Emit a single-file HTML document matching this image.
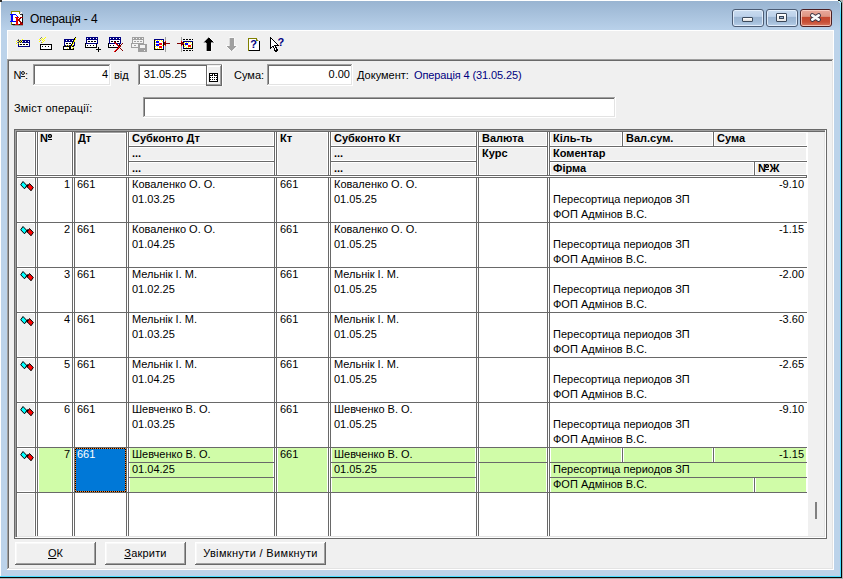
<!DOCTYPE html>
<html><head><meta charset="utf-8"><style>
html,body{margin:0;padding:0;width:843px;height:579px;overflow:hidden;background:#fff}
body{position:relative;font-family:"Liberation Sans",sans-serif}
div,svg{position:absolute}
.t{white-space:pre;font-family:"Liberation Sans",sans-serif}
</style></head><body>
<div style="left:0px;top:0px;width:843px;height:579px;background:#ffffff;"></div>
<div style="left:1px;top:1px;width:839px;height:575px;background:#bcd3ea;"></div>
<div style="left:1px;top:1px;width:839px;height:29px;background:linear-gradient(#99b4d1,#b9d1ea)"></div>
<div style="left:840px;top:1px;width:1px;height:576px;background:#48dcff;"></div>
<div style="left:0px;top:576px;width:841px;height:1px;background:#48dcff;"></div>
<div style="left:840px;top:1px;width:1px;height:14px;background:linear-gradient(#b8ecf8,#48dcff)"></div>
<div style="left:841px;top:3px;width:1px;height:575px;background:#050505;"></div>
<div style="left:0px;top:577px;width:842px;height:1px;background:#050505;"></div>
<div style="left:842px;top:0px;width:1px;height:579px;background:#b0b0b0;"></div>
<div style="left:0px;top:578px;width:843px;height:1px;background:#b0b0b0;"></div>
<div style="left:838px;top:0px;width:5px;height:3px;background:#b0b0b0;"></div>
<div style="left:838px;top:0px;width:2px;height:1px;background:#101010;"></div>
<div style="left:840px;top:1px;width:1px;height:1px;background:#1a5a60;"></div>
<div style="left:841px;top:2px;width:1px;height:1px;background:#1a5a60;"></div>
<div style="left:838px;top:1px;width:2px;height:1px;background:#b8e4f0;"></div>
<div style="left:839px;top:2px;width:2px;height:1px;background:#b8ecf8;"></div>
<div style="left:0px;top:0px;width:2px;height:2px;background:#303030;"></div>
<div style="left:7px;top:30px;width:827px;height:540px;background:#f0f0f0;"></div>
<div style="left:7px;top:30px;width:827px;height:1px;background:#ffffff;"></div>
<div style="left:7px;top:30px;width:1px;height:29px;background:#ffffff;"></div>
<div style="left:7px;top:59px;width:827px;height:1px;background:#a0a0a0;"></div>
<div style="left:7px;top:59px;width:1px;height:511px;background:#a0a0a0;"></div>
<div style="left:8px;top:60px;width:825px;height:1px;background:#696969;"></div>
<div style="left:8px;top:60px;width:1px;height:509px;background:#696969;"></div>
<div style="left:7px;top:569px;width:827px;height:1px;background:#ffffff;"></div>
<div style="left:833px;top:30px;width:1px;height:540px;background:#ffffff;"></div>
<div style="left:8px;top:568px;width:825px;height:1px;background:#e3e3e3;"></div>
<div style="left:832px;top:60px;width:1px;height:509px;background:#e3e3e3;"></div>
<svg style="left:0;top:0" width="30" height="30" viewBox="0 0 30 30" shape-rendering="crispEdges">
<rect x="12" y="12" width="10" height="12" fill="#ffffff"/>
<rect x="11" y="11" width="9" height="1" fill="#8a8a00"/><rect x="11" y="11" width="1" height="14" fill="#8a8a00"/>
<rect x="19" y="12" width="1" height="2" fill="#8a8a00"/><rect x="20" y="12" width="1" height="1" fill="#c8c8c8"/><rect x="21" y="13" width="1" height="1" fill="#c8c8c8"/>
<rect x="20" y="14" width="2" height="1" fill="#303030"/>
<rect x="22" y="14" width="1" height="10" fill="#101010"/>
<rect x="12" y="24" width="11" height="1" fill="#101010"/>
<rect x="13" y="25" width="10" height="1" fill="#8aa0a0"/>
<rect x="10" y="14" width="6" height="1" fill="#0000ff"/><rect x="11" y="14" width="2" height="8" fill="#0000ff"/>
<rect x="10" y="21" width="6" height="1" fill="#0000ff"/><rect x="16" y="15" width="1" height="1" fill="#0000ff"/>
<rect x="17" y="16" width="1" height="4" fill="#0000ff"/><rect x="16" y="20" width="1" height="1" fill="#0000ff"/>
<rect x="15" y="17" width="4" height="1" fill="#e00000"/><rect x="16" y="17" width="2" height="8" fill="#e00000"/>
<rect x="15" y="24" width="4" height="1" fill="#e00000"/>
<rect x="20" y="17" width="3" height="1" fill="#a00000"/><rect x="19" y="18" width="2" height="1" fill="#a00000"/><rect x="18" y="19" width="2" height="2" fill="#a00000"/>
<rect x="19" y="21" width="2" height="1" fill="#a00000"/><rect x="20" y="22" width="2" height="1" fill="#a00000"/><rect x="20" y="23" width="3" height="2" fill="#a00000"/>
</svg>
<div class="t" style="left:30px;top:12px;font-size:12px;line-height:15px;color:#000;letter-spacing:-0.15px;">Операція - 4</div>
<div style="left:732px;top:9px;width:30px;height:16px;border:1px solid #4c5c74;border-radius:3px;background:linear-gradient(#c9dbef 0%,#bcd1ea 40%,#9bb5d3 45%,#a3bdd9 75%,#b8cfea 100%);box-shadow:inset 0 0 0 1px rgba(235,244,255,0.8)"></div>
<div style="left:766px;top:9px;width:30px;height:16px;border:1px solid #4c5c74;border-radius:3px;background:linear-gradient(#c9dbef 0%,#bcd1ea 40%,#9bb5d3 45%,#a3bdd9 75%,#b8cfea 100%);box-shadow:inset 0 0 0 1px rgba(235,244,255,0.8)"></div>
<div style="left:800px;top:9px;width:30px;height:16px;border:1px solid #4b1f23;border-radius:3px;background:linear-gradient(#e9a99c 0%,#de9583 40%,#c4472e 45%,#c84f36 75%,#d77760 100%);box-shadow:inset 0 0 0 1px rgba(255,220,210,0.7)"></div>
<div style="left:742px;top:17px;width:9px;height:3px;border:1px solid #3c4a5c;border-radius:1px;background:linear-gradient(#ffffff,#dcdcdc)"></div>
<div style="left:776px;top:13px;width:9px;height:7px;border:1px solid #3a4658;border-radius:1px;background:linear-gradient(#ffffff,#e8e8e8)"></div>
<div style="left:779px;top:16px;width:3px;height:1px;border:1px solid #3a4658;background:#9fb8d6"></div>
<svg style="left:806px;top:10px" width="20" height="16" viewBox="0 0 20 16">
<path d="M6.3 5.4 L12.7 9.6 M12.7 5.4 L6.3 9.6" stroke="#3a3444" stroke-width="4.6" stroke-linecap="round"/>
<path d="M6.3 5.4 L12.7 9.6 M12.7 5.4 L6.3 9.6" stroke="#fafafa" stroke-width="2.7" stroke-linecap="round"/>
</svg>
<svg style="left:0;top:0" width="843" height="60" viewBox="0 0 843 60" shape-rendering="crispEdges"><rect x="18" y="40" width="12" height="7" fill="#000080"/><rect x="19" y="43" width="10" height="3" fill="#ffffff"/><rect x="22" y="41" width="1" height="1" fill="#ffffff"/><rect x="25" y="41" width="1" height="1" fill="#ffffff"/><rect x="28" y="41" width="1" height="1" fill="#ffffff"/><rect x="20" y="44" width="2" height="1" fill="#000000"/><rect x="23" y="44" width="2" height="1" fill="#000000"/><rect x="26" y="44" width="2" height="1" fill="#000000"/><rect x="16" y="41" width="1" height="1" fill="#ffff00"/><rect x="16" y="43" width="1" height="1" fill="#ffff00"/><rect x="19" y="40" width="1" height="1" fill="#ffff00"/><rect x="18" y="41" width="1" height="1" fill="#ffff00"/><rect x="20" y="41" width="1" height="1" fill="#ffff00"/><rect x="19" y="42" width="1" height="1" fill="#ffff00"/><rect x="21" y="40" width="1" height="1" fill="#ffff00"/><rect x="21" y="42" width="1" height="1" fill="#ffff00"/><rect x="22" y="39" width="1" height="1" fill="#ffff00"/><rect x="19" y="44" width="1" height="1" fill="#ffff00"/><rect x="18" y="39" width="1" height="1" fill="#808080"/><rect x="17" y="40" width="1" height="1" fill="#808080"/><rect x="17" y="42" width="1" height="1" fill="#808080"/><rect x="18" y="43" width="1" height="1" fill="#808080"/><rect x="21" y="41" width="1" height="1" fill="#000000"/><rect x="40" y="44" width="12" height="6" fill="#000000"/><rect x="41" y="45" width="10" height="4" fill="#ffffff"/><rect x="42" y="46" width="1" height="1" fill="#000000"/><rect x="45" y="46" width="1" height="1" fill="#000000"/><rect x="48" y="46" width="1" height="1" fill="#000000"/><rect x="39" y="39" width="1" height="1" fill="#ffff00"/><rect x="39" y="41" width="1" height="1" fill="#ffff00"/><rect x="42" y="38" width="1" height="1" fill="#ffff00"/><rect x="41" y="39" width="1" height="1" fill="#ffff00"/><rect x="43" y="39" width="1" height="1" fill="#ffff00"/><rect x="42" y="40" width="1" height="1" fill="#ffff00"/><rect x="44" y="38" width="1" height="1" fill="#ffff00"/><rect x="44" y="40" width="1" height="1" fill="#ffff00"/><rect x="45" y="37" width="1" height="1" fill="#ffff00"/><rect x="42" y="42" width="1" height="1" fill="#ffff00"/><rect x="43" y="41" width="1" height="1" fill="#ffff00"/><rect x="41" y="37" width="1" height="1" fill="#808080"/><rect x="40" y="38" width="1" height="1" fill="#808080"/><rect x="40" y="40" width="1" height="1" fill="#808080"/><rect x="41" y="42" width="1" height="1" fill="#808080"/><rect x="64" y="39" width="11" height="7" fill="#000080"/><rect x="65" y="42" width="9" height="3" fill="#ffffff"/><rect x="66" y="40" width="1" height="1" fill="#ffffff"/><rect x="69" y="40" width="1" height="1" fill="#ffffff"/><rect x="72" y="40" width="1" height="1" fill="#ffffff"/><rect x="66" y="43" width="2" height="1" fill="#000000"/><rect x="69" y="43" width="2" height="1" fill="#000000"/><rect x="63" y="46" width="11" height="4" fill="#000000"/><rect x="64" y="47" width="5" height="2" fill="#ffffff"/><rect x="71" y="47" width="2" height="2" fill="#ffffff"/><rect x="75" y="37" width="1" height="1" fill="#000000"/><rect x="74" y="38" width="1" height="1" fill="#000000"/><rect x="74" y="39" width="1" height="1" fill="#000000"/><rect x="73" y="40" width="1" height="1" fill="#000000"/><rect x="73" y="41" width="1" height="1" fill="#000000"/><rect x="72" y="42" width="1" height="1" fill="#000000"/><rect x="72" y="43" width="1" height="1" fill="#000000"/><rect x="71" y="44" width="1" height="1" fill="#000000"/><rect x="71" y="45" width="1" height="1" fill="#000000"/><rect x="70" y="46" width="1" height="1" fill="#000000"/><rect x="70" y="47" width="1" height="1" fill="#000000"/><rect x="75" y="38" width="1" height="1" fill="#ffff00"/><rect x="75" y="39" width="1" height="1" fill="#ffff00"/><rect x="74" y="40" width="1" height="1" fill="#ffff00"/><rect x="74" y="41" width="1" height="1" fill="#ffff00"/><rect x="73" y="42" width="1" height="1" fill="#ffff00"/><rect x="73" y="43" width="1" height="1" fill="#ffff00"/><rect x="72" y="44" width="1" height="1" fill="#ffff00"/><rect x="72" y="45" width="1" height="1" fill="#ffff00"/><rect x="71" y="46" width="1" height="1" fill="#ffff00"/><rect x="66" y="45" width="1" height="1" fill="#ffff00"/><rect x="68" y="45" width="1" height="1" fill="#ffff00"/><rect x="67" y="48" width="1" height="1" fill="#ffff00"/><rect x="72" y="48" width="1" height="1" fill="#ffff00"/><rect x="73" y="47" width="1" height="1" fill="#ffff00"/><rect x="85" y="43" width="12" height="5" fill="#000000"/><rect x="86" y="44" width="10" height="3" fill="#ffffff"/><rect x="86" y="37" width="12" height="7" fill="#000080"/><rect x="87" y="40" width="10" height="3" fill="#ffffff"/><rect x="87" y="38" width="1" height="1" fill="#ffffff"/><rect x="90" y="38" width="1" height="1" fill="#ffffff"/><rect x="93" y="38" width="1" height="1" fill="#ffffff"/><rect x="96" y="38" width="1" height="1" fill="#ffffff"/><rect x="88" y="41" width="2" height="1" fill="#000000"/><rect x="91" y="41" width="2" height="1" fill="#000000"/><rect x="94" y="41" width="2" height="1" fill="#000000"/><rect x="87" y="45" width="1" height="1" fill="#000000"/><rect x="90" y="45" width="1" height="1" fill="#000000"/><rect x="93" y="45" width="1" height="1" fill="#000000"/><rect x="96" y="49" width="5" height="1" fill="#000000"/><rect x="98" y="47" width="1" height="5" fill="#000000"/><rect x="108" y="43" width="12" height="5" fill="#000000"/><rect x="109" y="44" width="10" height="3" fill="#ffffff"/><rect x="109" y="37" width="12" height="7" fill="#000080"/><rect x="110" y="40" width="10" height="3" fill="#ffffff"/><rect x="110" y="38" width="1" height="1" fill="#ffffff"/><rect x="113" y="38" width="1" height="1" fill="#ffffff"/><rect x="116" y="38" width="1" height="1" fill="#ffffff"/><rect x="119" y="38" width="1" height="1" fill="#ffffff"/><rect x="111" y="41" width="2" height="1" fill="#000000"/><rect x="114" y="41" width="2" height="1" fill="#000000"/><rect x="117" y="41" width="2" height="1" fill="#000000"/><rect x="110" y="45" width="1" height="1" fill="#000000"/><rect x="113" y="45" width="1" height="1" fill="#000000"/><rect x="114" y="42" width="1" height="1" fill="#ff0000"/><rect x="115" y="42" width="1" height="1" fill="#800000"/><rect x="122" y="43" width="1" height="1" fill="#800000"/><rect x="115" y="43" width="1" height="1" fill="#ff0000"/><rect x="116" y="43" width="1" height="1" fill="#800000"/><rect x="121" y="44" width="1" height="1" fill="#800000"/><rect x="116" y="44" width="1" height="1" fill="#ff0000"/><rect x="117" y="44" width="1" height="1" fill="#800000"/><rect x="120" y="45" width="1" height="1" fill="#800000"/><rect x="117" y="45" width="1" height="1" fill="#ff0000"/><rect x="118" y="45" width="1" height="1" fill="#800000"/><rect x="119" y="46" width="1" height="1" fill="#ff0000"/><rect x="120" y="46" width="1" height="1" fill="#800000"/><rect x="118" y="46" width="1" height="1" fill="#800000"/><rect x="118" y="47" width="1" height="1" fill="#ff0000"/><rect x="119" y="47" width="1" height="1" fill="#800000"/><rect x="119" y="47" width="1" height="1" fill="#800000"/><rect x="117" y="48" width="1" height="1" fill="#ff0000"/><rect x="118" y="48" width="1" height="1" fill="#800000"/><rect x="120" y="48" width="1" height="1" fill="#800000"/><rect x="116" y="49" width="1" height="1" fill="#ff0000"/><rect x="117" y="49" width="1" height="1" fill="#800000"/><rect x="121" y="49" width="1" height="1" fill="#800000"/><rect x="115" y="50" width="1" height="1" fill="#ff0000"/><rect x="116" y="50" width="1" height="1" fill="#800000"/><rect x="122" y="50" width="1" height="1" fill="#800000"/><rect x="114" y="51" width="1" height="1" fill="#ff0000"/><rect x="115" y="51" width="1" height="1" fill="#800000"/><rect x="115" y="51" width="1" height="1" fill="#800000"/><rect x="132" y="37" width="12" height="7" fill="#a0a0a0"/><rect x="133" y="40" width="10" height="3" fill="#f4f4f4"/><rect x="133" y="38" width="1" height="1" fill="#f4f4f4"/><rect x="136" y="38" width="1" height="1" fill="#f4f4f4"/><rect x="139" y="38" width="1" height="1" fill="#f4f4f4"/><rect x="142" y="38" width="1" height="1" fill="#f4f4f4"/><rect x="134" y="41" width="2" height="1" fill="#a0a0a0"/><rect x="137" y="41" width="2" height="1" fill="#a0a0a0"/><rect x="140" y="41" width="2" height="1" fill="#a0a0a0"/><rect x="131" y="43" width="9" height="5" fill="#a0a0a0"/><rect x="132" y="44" width="7" height="3" fill="#f4f4f4"/><rect x="134" y="45" width="2" height="1" fill="#a0a0a0"/><rect x="138" y="44" width="9" height="8" fill="#a0a0a0"/><rect x="140" y="45" width="5" height="3" fill="#f4f4f4"/><rect x="144" y="50" width="1" height="1" fill="#f4f4f4"/><rect x="154" y="39" width="10" height="11" fill="#000000"/><rect x="154" y="39" width="10" height="1" fill="#000080"/><rect x="163" y="39" width="1" height="3" fill="#000080"/><rect x="163" y="46" width="1" height="3" fill="#000080"/><rect x="155" y="40" width="8" height="9" fill="#ffffff"/><rect x="155" y="40" width="1" height="1" fill="#ffff00"/><rect x="157" y="40" width="1" height="1" fill="#ffff00"/><rect x="159" y="40" width="1" height="1" fill="#ffff00"/><rect x="161" y="40" width="1" height="1" fill="#ffff00"/><rect x="155" y="42" width="1" height="1" fill="#ffff00"/><rect x="155" y="44" width="1" height="1" fill="#ffff00"/><rect x="155" y="46" width="1" height="1" fill="#ffff00"/><rect x="155" y="48" width="1" height="1" fill="#ffff00"/><rect x="157" y="48" width="1" height="1" fill="#ffff00"/><rect x="159" y="48" width="1" height="1" fill="#ffff00"/><rect x="161" y="48" width="1" height="1" fill="#ffff00"/><rect x="162" y="41" width="1" height="1" fill="#ffff00"/><rect x="162" y="45" width="1" height="1" fill="#ffff00"/><rect x="157" y="46" width="1" height="1" fill="#ffff00"/><rect x="156" y="41" width="3" height="2" fill="#0000ff"/><rect x="156" y="44" width="3" height="2" fill="#0000ff"/><rect x="159" y="43" width="3" height="2" fill="#ff0000"/><rect x="159" y="46" width="3" height="2" fill="#ff0000"/><rect x="165" y="37" width="1" height="15" fill="#a0a0a0"/><rect x="164" y="43" width="6" height="1" fill="#800000"/><rect x="165" y="41" width="1" height="1" fill="#ff0000"/><rect x="164" y="42" width="2" height="1" fill="#800000"/><rect x="164" y="44" width="2" height="1" fill="#800000"/><rect x="165" y="45" width="1" height="1" fill="#ff0000"/><rect x="181" y="37" width="1" height="15" fill="#a0a0a0"/><rect x="183" y="39" width="2" height="1" fill="#000000"/><rect x="186" y="39" width="2" height="1" fill="#000000"/><rect x="189" y="39" width="2" height="1" fill="#000000"/><rect x="192" y="39" width="1" height="1" fill="#000000"/><rect x="183" y="50" width="2" height="1" fill="#000000"/><rect x="186" y="50" width="2" height="1" fill="#000000"/><rect x="189" y="50" width="2" height="1" fill="#000000"/><rect x="192" y="50" width="1" height="1" fill="#000000"/><rect x="183" y="41" width="10" height="8" fill="#000000"/><rect x="183" y="41" width="10" height="1" fill="#000080"/><rect x="183" y="46" width="1" height="3" fill="#000080"/><rect x="184" y="42" width="8" height="6" fill="#ffffff"/><rect x="184" y="42" width="1" height="1" fill="#ffff00"/><rect x="186" y="42" width="1" height="1" fill="#ffff00"/><rect x="188" y="42" width="1" height="1" fill="#ffff00"/><rect x="190" y="42" width="1" height="1" fill="#ffff00"/><rect x="184" y="44" width="1" height="1" fill="#ffff00"/><rect x="184" y="46" width="1" height="1" fill="#ffff00"/><rect x="186" y="47" width="1" height="1" fill="#ffff00"/><rect x="188" y="47" width="1" height="1" fill="#ffff00"/><rect x="190" y="47" width="1" height="1" fill="#ffff00"/><rect x="191" y="44" width="1" height="1" fill="#ffff00"/><rect x="185" y="45" width="1" height="1" fill="#ffff00"/><rect x="185" y="43" width="3" height="2" fill="#0000ff"/><rect x="188" y="45" width="3" height="2" fill="#ff0000"/><rect x="177" y="43" width="6" height="1" fill="#800000"/><rect x="181" y="41" width="1" height="1" fill="#ff0000"/><rect x="181" y="42" width="2" height="1" fill="#800000"/><rect x="181" y="44" width="2" height="1" fill="#800000"/><rect x="181" y="45" width="1" height="1" fill="#ff0000"/><rect x="183" y="43" width="1" height="1" fill="#ff0000"/><path d="M208.5 37 L214 42.5 L211 42.5 L211 51 L206 51 L206 42.5 L203 42.5 Z" fill="#000" stroke="#fff" stroke-width="0.6"/><path d="M229 37.5 L234 37.5 L234 45.5 L237 45.5 L231.5 51 L226 45.5 L229 45.5 Z" fill="#a0a0a0" stroke="#fff" stroke-width="0.6"/><rect x="249" y="39" width="10" height="12" fill="#ffffff"/><rect x="248" y="38" width="9" height="1" fill="#808000"/><rect x="248" y="38" width="1" height="13" fill="#808000"/><rect x="256" y="38" width="1" height="3" fill="#808000"/><rect x="256" y="40" width="2" height="1" fill="#808000"/><rect x="257" y="39" width="1" height="1" fill="#c0c0c0"/><rect x="258" y="40" width="1" height="1" fill="#c0c0c0"/><rect x="259" y="41" width="1" height="10" fill="#000000"/><rect x="249" y="50" width="11" height="1" fill="#000000"/><text x="250.2" y="48.4" font-family="Liberation Sans" font-weight="bold" font-size="11" fill="#000080">?</text><path d="M270.5 37.5 L270.5 48.5 L273 46 L275.5 51.5 L277.5 50.5 L275 45.5 L278.5 45.5 Z" fill="#ffffff" stroke="#000" stroke-width="1"/><text x="277.5" y="46" font-family="Liberation Sans" font-weight="bold" font-size="11" fill="#000080">?</text></svg>
<div class="t" style="left:13.6px;top:68px;font-size:11px;line-height:15px;color:#000;">N</div>
<svg style="left:21px;top:71px" width="4" height="4" viewBox="0 0 4 4"><ellipse cx="2" cy="2" rx="1.45" ry="1.45" fill="none" stroke="#000" stroke-width="0.95"/></svg>
<div style="left:21px;top:76px;width:4px;height:1px;background:#202020;"></div>
<div class="t" style="left:25px;top:68px;font-size:11px;line-height:15px;color:#000;">:</div>
<div style="left:33px;top:64px;width:78px;height:22px;background:#ffffff;"></div>
<div style="left:33px;top:64px;width:77px;height:1px;background:#a0a0a0;"></div>
<div style="left:33px;top:64px;width:1px;height:21px;background:#a0a0a0;"></div>
<div style="left:34px;top:65px;width:75px;height:1px;background:#696969;"></div>
<div style="left:34px;top:65px;width:1px;height:19px;background:#696969;"></div>
<div style="left:33px;top:85px;width:78px;height:1px;background:#ffffff;"></div>
<div style="left:110px;top:64px;width:1px;height:22px;background:#ffffff;"></div>
<div style="left:34px;top:84px;width:76px;height:1px;background:#e3e3e3;"></div>
<div style="left:109px;top:65px;width:1px;height:20px;background:#e3e3e3;"></div>
<div class="t" style="left:68px;top:67px;width:40px;text-align:right;font-size:11px;line-height:15px;color:#000;">4</div>
<div class="t" style="left:114px;top:68px;font-size:11px;line-height:15px;color:#000;">від</div>
<div style="left:138px;top:64px;width:85px;height:22px;background:#ffffff;"></div>
<div style="left:138px;top:64px;width:84px;height:1px;background:#a0a0a0;"></div>
<div style="left:138px;top:64px;width:1px;height:21px;background:#a0a0a0;"></div>
<div style="left:139px;top:65px;width:82px;height:1px;background:#696969;"></div>
<div style="left:139px;top:65px;width:1px;height:19px;background:#696969;"></div>
<div style="left:138px;top:85px;width:85px;height:1px;background:#ffffff;"></div>
<div style="left:222px;top:64px;width:1px;height:22px;background:#ffffff;"></div>
<div style="left:139px;top:84px;width:83px;height:1px;background:#e3e3e3;"></div>
<div style="left:221px;top:65px;width:1px;height:20px;background:#e3e3e3;"></div>
<div class="t" style="left:143.7px;top:67px;font-size:11px;line-height:15px;color:#000;">31.05.25</div>
<div style="left:206px;top:65px;width:16px;height:21px;background:#f0f0f0;"></div>
<div style="left:206px;top:65px;width:1px;height:21px;background:#696969;"></div>
<div style="left:207px;top:66px;width:13px;height:1px;background:#ffffff;"></div>
<div style="left:207px;top:66px;width:1px;height:18px;background:#ffffff;"></div>
<div style="left:220px;top:66px;width:1px;height:19px;background:#a0a0a0;"></div>
<div style="left:207px;top:84px;width:14px;height:1px;background:#a0a0a0;"></div>
<div style="left:221px;top:65px;width:1px;height:21px;background:#696969;"></div>
<div style="left:206px;top:85px;width:16px;height:1px;background:#696969;"></div>
<svg style="left:209px;top:73px" width="9" height="9" viewBox="0 0 9 9" shape-rendering="crispEdges">
<rect x="0" y="0" width="9" height="9" fill="#000"/>
<rect x="1" y="1" width="2" height="1" fill="#fff"/><rect x="6" y="1" width="2" height="1" fill="#fff"/>
<rect x="4" y="1" width="1" height="2" fill="#fff"/>
<rect x="1" y="3" width="7" height="5" fill="#fff"/>
<rect x="3" y="4" width="1" height="1" fill="#000"/><rect x="5" y="4" width="1" height="1" fill="#000"/>
<rect x="3" y="6" width="1" height="1" fill="#000"/><rect x="5" y="6" width="1" height="1" fill="#000"/>
<rect x="1" y="4" width="1" height="1" fill="#000"/><rect x="7" y="4" width="1" height="1" fill="#000"/>
<rect x="1" y="6" width="1" height="1" fill="#000"/><rect x="7" y="6" width="1" height="1" fill="#000"/>
</svg>
<div class="t" style="left:234px;top:68px;font-size:11px;line-height:15px;color:#000;">Сума:</div>
<div style="left:267px;top:64px;width:86px;height:22px;background:#ffffff;"></div>
<div style="left:267px;top:64px;width:85px;height:1px;background:#a0a0a0;"></div>
<div style="left:267px;top:64px;width:1px;height:21px;background:#a0a0a0;"></div>
<div style="left:268px;top:65px;width:83px;height:1px;background:#696969;"></div>
<div style="left:268px;top:65px;width:1px;height:19px;background:#696969;"></div>
<div style="left:267px;top:85px;width:86px;height:1px;background:#ffffff;"></div>
<div style="left:352px;top:64px;width:1px;height:22px;background:#ffffff;"></div>
<div style="left:268px;top:84px;width:84px;height:1px;background:#e3e3e3;"></div>
<div style="left:351px;top:65px;width:1px;height:20px;background:#e3e3e3;"></div>
<div class="t" style="left:290px;top:67px;width:60px;text-align:right;font-size:11px;line-height:15px;color:#000;">0.00</div>
<div class="t" style="left:357px;top:68px;font-size:11px;line-height:15px;color:#000;">Документ:</div>
<div class="t" style="left:414px;top:68px;font-size:11px;line-height:15px;color:#000080;letter-spacing:-0.12px;">Операція 4 (31.05.25)</div>
<div class="t" style="left:14px;top:101px;font-size:11px;line-height:15px;color:#000;letter-spacing:0.2px;">Зміст операції:</div>
<div style="left:143px;top:97px;width:473px;height:21px;background:#ffffff;"></div>
<div style="left:143px;top:97px;width:472px;height:1px;background:#a0a0a0;"></div>
<div style="left:143px;top:97px;width:1px;height:20px;background:#a0a0a0;"></div>
<div style="left:144px;top:98px;width:470px;height:1px;background:#696969;"></div>
<div style="left:144px;top:98px;width:1px;height:18px;background:#696969;"></div>
<div style="left:143px;top:117px;width:473px;height:1px;background:#ffffff;"></div>
<div style="left:615px;top:97px;width:1px;height:21px;background:#ffffff;"></div>
<div style="left:144px;top:116px;width:471px;height:1px;background:#e3e3e3;"></div>
<div style="left:614px;top:98px;width:1px;height:19px;background:#e3e3e3;"></div>
<div style="left:15px;top:542px;width:81px;height:23px;background:#f0f0f0;"></div>
<div style="left:15px;top:542px;width:80px;height:1px;background:#ffffff;"></div>
<div style="left:15px;top:542px;width:1px;height:22px;background:#ffffff;"></div>
<div style="left:16px;top:543px;width:78px;height:1px;background:#f8f8f8;"></div>
<div style="left:16px;top:543px;width:1px;height:20px;background:#f8f8f8;"></div>
<div style="left:15px;top:564px;width:81px;height:1px;background:#696969;"></div>
<div style="left:95px;top:542px;width:1px;height:23px;background:#696969;"></div>
<div style="left:16px;top:563px;width:79px;height:1px;background:#a0a0a0;"></div>
<div style="left:94px;top:543px;width:1px;height:21px;background:#a0a0a0;"></div>
<div class="t" style="left:15px;top:546px;width:81px;text-align:center;font-size:11px;line-height:15px;letter-spacing:0px"><u>О</u>К</div>
<div style="left:105px;top:542px;width:81px;height:23px;background:#f0f0f0;"></div>
<div style="left:105px;top:542px;width:80px;height:1px;background:#ffffff;"></div>
<div style="left:105px;top:542px;width:1px;height:22px;background:#ffffff;"></div>
<div style="left:106px;top:543px;width:78px;height:1px;background:#f8f8f8;"></div>
<div style="left:106px;top:543px;width:1px;height:20px;background:#f8f8f8;"></div>
<div style="left:105px;top:564px;width:81px;height:1px;background:#696969;"></div>
<div style="left:185px;top:542px;width:1px;height:23px;background:#696969;"></div>
<div style="left:106px;top:563px;width:79px;height:1px;background:#a0a0a0;"></div>
<div style="left:184px;top:543px;width:1px;height:21px;background:#a0a0a0;"></div>
<div class="t" style="left:105px;top:546px;width:81px;text-align:center;font-size:11px;line-height:15px;letter-spacing:0.2px"><u>З</u>акрити</div>
<div style="left:195px;top:542px;width:131px;height:23px;background:#f0f0f0;"></div>
<div style="left:195px;top:542px;width:130px;height:1px;background:#ffffff;"></div>
<div style="left:195px;top:542px;width:1px;height:22px;background:#ffffff;"></div>
<div style="left:196px;top:543px;width:128px;height:1px;background:#f8f8f8;"></div>
<div style="left:196px;top:543px;width:1px;height:20px;background:#f8f8f8;"></div>
<div style="left:195px;top:564px;width:131px;height:1px;background:#696969;"></div>
<div style="left:325px;top:542px;width:1px;height:23px;background:#696969;"></div>
<div style="left:196px;top:563px;width:129px;height:1px;background:#a0a0a0;"></div>
<div style="left:324px;top:543px;width:1px;height:21px;background:#a0a0a0;"></div>
<div class="t" style="left:195px;top:546px;width:131px;text-align:center;font-size:11px;line-height:15px;letter-spacing:0.35px">Увімкнути / Вимкнути</div>
<div style="left:14px;top:129px;width:813px;height:410px;background:#696969;"></div>
<div style="left:15px;top:130px;width:811px;height:408px;background:#ffffff;"></div>
<div style="left:15px;top:130px;width:810px;height:1px;background:#a0a0a0;"></div>
<div style="left:15px;top:130px;width:1px;height:407px;background:#a0a0a0;"></div>
<div style="left:16px;top:131px;width:809px;height:406px;background:#696969;"></div>
<div style="left:17px;top:132px;width:808px;height:405px;background:#e3e3e3;"></div>
<div style="left:17px;top:132px;width:807px;height:404px;background:#f0f0f0;"></div>
<div style="left:17px;top:132px;width:791px;height:404px;background:#ffffff;"></div>
<div style="left:18px;top:133px;width:16px;height:41px;background:#f0f0f0;"></div>
<div style="left:39px;top:133px;width:32px;height:41px;background:#f0f0f0;"></div>
<div style="left:75px;top:132px;width:51px;height:1px;background:#a0a0a0;"></div>
<div style="left:75px;top:132px;width:1px;height:43px;background:#a0a0a0;"></div>
<div style="left:77px;top:134px;width:48px;height:40px;background:#f0f0f0;"></div>
<div style="left:130px;top:133px;width:143px;height:12px;background:#f0f0f0;"></div>
<div style="left:130px;top:148px;width:143px;height:12px;background:#f0f0f0;"></div>
<div style="left:130px;top:163px;width:143px;height:11px;background:#f0f0f0;"></div>
<div style="left:278px;top:133px;width:49px;height:41px;background:#f0f0f0;"></div>
<div style="left:332px;top:133px;width:143px;height:12px;background:#f0f0f0;"></div>
<div style="left:332px;top:148px;width:143px;height:12px;background:#f0f0f0;"></div>
<div style="left:332px;top:163px;width:143px;height:11px;background:#f0f0f0;"></div>
<div style="left:480px;top:133px;width:66px;height:12px;background:#f0f0f0;"></div>
<div style="left:480px;top:148px;width:66px;height:26px;background:#f0f0f0;"></div>
<div style="left:551px;top:133px;width:70px;height:12px;background:#f0f0f0;"></div>
<div style="left:624px;top:133px;width:88px;height:12px;background:#f0f0f0;"></div>
<div style="left:715px;top:133px;width:91px;height:12px;background:#f0f0f0;"></div>
<div style="left:551px;top:148px;width:255px;height:12px;background:#f0f0f0;"></div>
<div style="left:551px;top:163px;width:202px;height:11px;background:#f0f0f0;"></div>
<div style="left:756px;top:163px;width:50px;height:11px;background:#f0f0f0;"></div>
<div style="left:16px;top:131px;width:808px;height:1px;background:#696969;"></div>
<div style="left:16px;top:175px;width:791px;height:1px;background:#696969;"></div>
<div style="left:16px;top:177px;width:791px;height:1px;background:#696969;"></div>
<div style="left:16px;top:132px;width:1px;height:43px;background:#696969;"></div>
<div style="left:35px;top:132px;width:1px;height:43px;background:#696969;"></div>
<div style="left:37px;top:132px;width:1px;height:43px;background:#696969;"></div>
<div style="left:72px;top:132px;width:1px;height:43px;background:#696969;"></div>
<div style="left:74px;top:132px;width:1px;height:43px;background:#696969;"></div>
<div style="left:126px;top:132px;width:1px;height:43px;background:#696969;"></div>
<div style="left:128px;top:132px;width:1px;height:43px;background:#696969;"></div>
<div style="left:274px;top:132px;width:1px;height:43px;background:#696969;"></div>
<div style="left:276px;top:132px;width:1px;height:43px;background:#696969;"></div>
<div style="left:328px;top:132px;width:1px;height:43px;background:#696969;"></div>
<div style="left:330px;top:132px;width:1px;height:43px;background:#696969;"></div>
<div style="left:476px;top:132px;width:1px;height:43px;background:#696969;"></div>
<div style="left:478px;top:132px;width:1px;height:43px;background:#696969;"></div>
<div style="left:547px;top:132px;width:1px;height:43px;background:#696969;"></div>
<div style="left:549px;top:132px;width:1px;height:43px;background:#696969;"></div>
<div style="left:806px;top:175px;width:1px;height:3px;background:#696969;"></div>
<div style="left:129px;top:146px;width:145px;height:1px;background:#696969;"></div>
<div style="left:129px;top:161px;width:145px;height:1px;background:#696969;"></div>
<div style="left:331px;top:146px;width:145px;height:1px;background:#696969;"></div>
<div style="left:331px;top:161px;width:145px;height:1px;background:#696969;"></div>
<div style="left:479px;top:146px;width:68px;height:1px;background:#696969;"></div>
<div style="left:550px;top:146px;width:257px;height:1px;background:#696969;"></div>
<div style="left:550px;top:161px;width:257px;height:1px;background:#696969;"></div>
<div style="left:622px;top:132px;width:1px;height:14px;background:#696969;"></div>
<div style="left:713px;top:132px;width:1px;height:14px;background:#696969;"></div>
<div style="left:754px;top:162px;width:1px;height:13px;background:#696969;"></div>
<div style="left:18px;top:179px;width:16px;height:42px;background:#f0f0f0;"></div>
<div style="left:16px;top:222px;width:791px;height:1px;background:#696969;"></div>
<div style="left:18px;top:224px;width:16px;height:42px;background:#f0f0f0;"></div>
<div style="left:16px;top:267px;width:791px;height:1px;background:#696969;"></div>
<div style="left:18px;top:269px;width:16px;height:42px;background:#f0f0f0;"></div>
<div style="left:16px;top:312px;width:791px;height:1px;background:#696969;"></div>
<div style="left:18px;top:314px;width:16px;height:42px;background:#f0f0f0;"></div>
<div style="left:16px;top:357px;width:791px;height:1px;background:#696969;"></div>
<div style="left:18px;top:359px;width:16px;height:42px;background:#f0f0f0;"></div>
<div style="left:16px;top:402px;width:791px;height:1px;background:#696969;"></div>
<div style="left:18px;top:404px;width:16px;height:42px;background:#f0f0f0;"></div>
<div style="left:16px;top:447px;width:791px;height:1px;background:#696969;"></div>
<div style="left:18px;top:449px;width:16px;height:42px;background:#f0f0f0;"></div>
<div style="left:16px;top:492px;width:791px;height:1px;background:#696969;"></div>
<div style="left:18px;top:494px;width:16px;height:42px;background:#f0f0f0;"></div>
<div style="left:16px;top:178px;width:1px;height:358px;background:#696969;"></div>
<div style="left:35px;top:178px;width:1px;height:358px;background:#696969;"></div>
<div style="left:37px;top:178px;width:1px;height:358px;background:#696969;"></div>
<div style="left:72px;top:178px;width:1px;height:358px;background:#696969;"></div>
<div style="left:74px;top:178px;width:1px;height:358px;background:#696969;"></div>
<div style="left:126px;top:178px;width:1px;height:358px;background:#696969;"></div>
<div style="left:128px;top:178px;width:1px;height:358px;background:#696969;"></div>
<div style="left:274px;top:178px;width:1px;height:358px;background:#696969;"></div>
<div style="left:276px;top:178px;width:1px;height:358px;background:#696969;"></div>
<div style="left:328px;top:178px;width:1px;height:358px;background:#696969;"></div>
<div style="left:330px;top:178px;width:1px;height:358px;background:#696969;"></div>
<div style="left:476px;top:178px;width:1px;height:358px;background:#696969;"></div>
<div style="left:478px;top:178px;width:1px;height:358px;background:#696969;"></div>
<div style="left:547px;top:178px;width:1px;height:358px;background:#696969;"></div>
<div style="left:549px;top:178px;width:1px;height:358px;background:#696969;"></div>
<div style="left:39px;top:448px;width:32px;height:44px;background:#d0fca8;"></div>
<div style="left:75px;top:448px;width:51px;height:44px;background:#0078d7;"></div>
<svg style="left:0;top:0" width="843" height="579" viewBox="0 0 843 579" shape-rendering="crispEdges"><rect x="75" y="448" width="1" height="1" fill="#ff8728"/><rect x="75" y="491" width="1" height="1" fill="#000"/><rect x="76" y="448" width="1" height="1" fill="#000"/><rect x="76" y="491" width="1" height="1" fill="#ff8728"/><rect x="77" y="448" width="1" height="1" fill="#ff8728"/><rect x="77" y="491" width="1" height="1" fill="#000"/><rect x="78" y="448" width="1" height="1" fill="#000"/><rect x="78" y="491" width="1" height="1" fill="#ff8728"/><rect x="79" y="448" width="1" height="1" fill="#ff8728"/><rect x="79" y="491" width="1" height="1" fill="#000"/><rect x="80" y="448" width="1" height="1" fill="#000"/><rect x="80" y="491" width="1" height="1" fill="#ff8728"/><rect x="81" y="448" width="1" height="1" fill="#ff8728"/><rect x="81" y="491" width="1" height="1" fill="#000"/><rect x="82" y="448" width="1" height="1" fill="#000"/><rect x="82" y="491" width="1" height="1" fill="#ff8728"/><rect x="83" y="448" width="1" height="1" fill="#ff8728"/><rect x="83" y="491" width="1" height="1" fill="#000"/><rect x="84" y="448" width="1" height="1" fill="#000"/><rect x="84" y="491" width="1" height="1" fill="#ff8728"/><rect x="85" y="448" width="1" height="1" fill="#ff8728"/><rect x="85" y="491" width="1" height="1" fill="#000"/><rect x="86" y="448" width="1" height="1" fill="#000"/><rect x="86" y="491" width="1" height="1" fill="#ff8728"/><rect x="87" y="448" width="1" height="1" fill="#ff8728"/><rect x="87" y="491" width="1" height="1" fill="#000"/><rect x="88" y="448" width="1" height="1" fill="#000"/><rect x="88" y="491" width="1" height="1" fill="#ff8728"/><rect x="89" y="448" width="1" height="1" fill="#ff8728"/><rect x="89" y="491" width="1" height="1" fill="#000"/><rect x="90" y="448" width="1" height="1" fill="#000"/><rect x="90" y="491" width="1" height="1" fill="#ff8728"/><rect x="91" y="448" width="1" height="1" fill="#ff8728"/><rect x="91" y="491" width="1" height="1" fill="#000"/><rect x="92" y="448" width="1" height="1" fill="#000"/><rect x="92" y="491" width="1" height="1" fill="#ff8728"/><rect x="93" y="448" width="1" height="1" fill="#ff8728"/><rect x="93" y="491" width="1" height="1" fill="#000"/><rect x="94" y="448" width="1" height="1" fill="#000"/><rect x="94" y="491" width="1" height="1" fill="#ff8728"/><rect x="95" y="448" width="1" height="1" fill="#ff8728"/><rect x="95" y="491" width="1" height="1" fill="#000"/><rect x="96" y="448" width="1" height="1" fill="#000"/><rect x="96" y="491" width="1" height="1" fill="#ff8728"/><rect x="97" y="448" width="1" height="1" fill="#ff8728"/><rect x="97" y="491" width="1" height="1" fill="#000"/><rect x="98" y="448" width="1" height="1" fill="#000"/><rect x="98" y="491" width="1" height="1" fill="#ff8728"/><rect x="99" y="448" width="1" height="1" fill="#ff8728"/><rect x="99" y="491" width="1" height="1" fill="#000"/><rect x="100" y="448" width="1" height="1" fill="#000"/><rect x="100" y="491" width="1" height="1" fill="#ff8728"/><rect x="101" y="448" width="1" height="1" fill="#ff8728"/><rect x="101" y="491" width="1" height="1" fill="#000"/><rect x="102" y="448" width="1" height="1" fill="#000"/><rect x="102" y="491" width="1" height="1" fill="#ff8728"/><rect x="103" y="448" width="1" height="1" fill="#ff8728"/><rect x="103" y="491" width="1" height="1" fill="#000"/><rect x="104" y="448" width="1" height="1" fill="#000"/><rect x="104" y="491" width="1" height="1" fill="#ff8728"/><rect x="105" y="448" width="1" height="1" fill="#ff8728"/><rect x="105" y="491" width="1" height="1" fill="#000"/><rect x="106" y="448" width="1" height="1" fill="#000"/><rect x="106" y="491" width="1" height="1" fill="#ff8728"/><rect x="107" y="448" width="1" height="1" fill="#ff8728"/><rect x="107" y="491" width="1" height="1" fill="#000"/><rect x="108" y="448" width="1" height="1" fill="#000"/><rect x="108" y="491" width="1" height="1" fill="#ff8728"/><rect x="109" y="448" width="1" height="1" fill="#ff8728"/><rect x="109" y="491" width="1" height="1" fill="#000"/><rect x="110" y="448" width="1" height="1" fill="#000"/><rect x="110" y="491" width="1" height="1" fill="#ff8728"/><rect x="111" y="448" width="1" height="1" fill="#ff8728"/><rect x="111" y="491" width="1" height="1" fill="#000"/><rect x="112" y="448" width="1" height="1" fill="#000"/><rect x="112" y="491" width="1" height="1" fill="#ff8728"/><rect x="113" y="448" width="1" height="1" fill="#ff8728"/><rect x="113" y="491" width="1" height="1" fill="#000"/><rect x="114" y="448" width="1" height="1" fill="#000"/><rect x="114" y="491" width="1" height="1" fill="#ff8728"/><rect x="115" y="448" width="1" height="1" fill="#ff8728"/><rect x="115" y="491" width="1" height="1" fill="#000"/><rect x="116" y="448" width="1" height="1" fill="#000"/><rect x="116" y="491" width="1" height="1" fill="#ff8728"/><rect x="117" y="448" width="1" height="1" fill="#ff8728"/><rect x="117" y="491" width="1" height="1" fill="#000"/><rect x="118" y="448" width="1" height="1" fill="#000"/><rect x="118" y="491" width="1" height="1" fill="#ff8728"/><rect x="119" y="448" width="1" height="1" fill="#ff8728"/><rect x="119" y="491" width="1" height="1" fill="#000"/><rect x="120" y="448" width="1" height="1" fill="#000"/><rect x="120" y="491" width="1" height="1" fill="#ff8728"/><rect x="121" y="448" width="1" height="1" fill="#ff8728"/><rect x="121" y="491" width="1" height="1" fill="#000"/><rect x="122" y="448" width="1" height="1" fill="#000"/><rect x="122" y="491" width="1" height="1" fill="#ff8728"/><rect x="123" y="448" width="1" height="1" fill="#ff8728"/><rect x="123" y="491" width="1" height="1" fill="#000"/><rect x="124" y="448" width="1" height="1" fill="#000"/><rect x="124" y="491" width="1" height="1" fill="#ff8728"/><rect x="125" y="448" width="1" height="1" fill="#ff8728"/><rect x="125" y="491" width="1" height="1" fill="#000"/><rect x="75" y="448" width="1" height="1" fill="#ff8728"/><rect x="125" y="448" width="1" height="1" fill="#ff8728"/><rect x="75" y="449" width="1" height="1" fill="#000"/><rect x="125" y="449" width="1" height="1" fill="#000"/><rect x="75" y="450" width="1" height="1" fill="#ff8728"/><rect x="125" y="450" width="1" height="1" fill="#ff8728"/><rect x="75" y="451" width="1" height="1" fill="#000"/><rect x="125" y="451" width="1" height="1" fill="#000"/><rect x="75" y="452" width="1" height="1" fill="#ff8728"/><rect x="125" y="452" width="1" height="1" fill="#ff8728"/><rect x="75" y="453" width="1" height="1" fill="#000"/><rect x="125" y="453" width="1" height="1" fill="#000"/><rect x="75" y="454" width="1" height="1" fill="#ff8728"/><rect x="125" y="454" width="1" height="1" fill="#ff8728"/><rect x="75" y="455" width="1" height="1" fill="#000"/><rect x="125" y="455" width="1" height="1" fill="#000"/><rect x="75" y="456" width="1" height="1" fill="#ff8728"/><rect x="125" y="456" width="1" height="1" fill="#ff8728"/><rect x="75" y="457" width="1" height="1" fill="#000"/><rect x="125" y="457" width="1" height="1" fill="#000"/><rect x="75" y="458" width="1" height="1" fill="#ff8728"/><rect x="125" y="458" width="1" height="1" fill="#ff8728"/><rect x="75" y="459" width="1" height="1" fill="#000"/><rect x="125" y="459" width="1" height="1" fill="#000"/><rect x="75" y="460" width="1" height="1" fill="#ff8728"/><rect x="125" y="460" width="1" height="1" fill="#ff8728"/><rect x="75" y="461" width="1" height="1" fill="#000"/><rect x="125" y="461" width="1" height="1" fill="#000"/><rect x="75" y="462" width="1" height="1" fill="#ff8728"/><rect x="125" y="462" width="1" height="1" fill="#ff8728"/><rect x="75" y="463" width="1" height="1" fill="#000"/><rect x="125" y="463" width="1" height="1" fill="#000"/><rect x="75" y="464" width="1" height="1" fill="#ff8728"/><rect x="125" y="464" width="1" height="1" fill="#ff8728"/><rect x="75" y="465" width="1" height="1" fill="#000"/><rect x="125" y="465" width="1" height="1" fill="#000"/><rect x="75" y="466" width="1" height="1" fill="#ff8728"/><rect x="125" y="466" width="1" height="1" fill="#ff8728"/><rect x="75" y="467" width="1" height="1" fill="#000"/><rect x="125" y="467" width="1" height="1" fill="#000"/><rect x="75" y="468" width="1" height="1" fill="#ff8728"/><rect x="125" y="468" width="1" height="1" fill="#ff8728"/><rect x="75" y="469" width="1" height="1" fill="#000"/><rect x="125" y="469" width="1" height="1" fill="#000"/><rect x="75" y="470" width="1" height="1" fill="#ff8728"/><rect x="125" y="470" width="1" height="1" fill="#ff8728"/><rect x="75" y="471" width="1" height="1" fill="#000"/><rect x="125" y="471" width="1" height="1" fill="#000"/><rect x="75" y="472" width="1" height="1" fill="#ff8728"/><rect x="125" y="472" width="1" height="1" fill="#ff8728"/><rect x="75" y="473" width="1" height="1" fill="#000"/><rect x="125" y="473" width="1" height="1" fill="#000"/><rect x="75" y="474" width="1" height="1" fill="#ff8728"/><rect x="125" y="474" width="1" height="1" fill="#ff8728"/><rect x="75" y="475" width="1" height="1" fill="#000"/><rect x="125" y="475" width="1" height="1" fill="#000"/><rect x="75" y="476" width="1" height="1" fill="#ff8728"/><rect x="125" y="476" width="1" height="1" fill="#ff8728"/><rect x="75" y="477" width="1" height="1" fill="#000"/><rect x="125" y="477" width="1" height="1" fill="#000"/><rect x="75" y="478" width="1" height="1" fill="#ff8728"/><rect x="125" y="478" width="1" height="1" fill="#ff8728"/><rect x="75" y="479" width="1" height="1" fill="#000"/><rect x="125" y="479" width="1" height="1" fill="#000"/><rect x="75" y="480" width="1" height="1" fill="#ff8728"/><rect x="125" y="480" width="1" height="1" fill="#ff8728"/><rect x="75" y="481" width="1" height="1" fill="#000"/><rect x="125" y="481" width="1" height="1" fill="#000"/><rect x="75" y="482" width="1" height="1" fill="#ff8728"/><rect x="125" y="482" width="1" height="1" fill="#ff8728"/><rect x="75" y="483" width="1" height="1" fill="#000"/><rect x="125" y="483" width="1" height="1" fill="#000"/><rect x="75" y="484" width="1" height="1" fill="#ff8728"/><rect x="125" y="484" width="1" height="1" fill="#ff8728"/><rect x="75" y="485" width="1" height="1" fill="#000"/><rect x="125" y="485" width="1" height="1" fill="#000"/><rect x="75" y="486" width="1" height="1" fill="#ff8728"/><rect x="125" y="486" width="1" height="1" fill="#ff8728"/><rect x="75" y="487" width="1" height="1" fill="#000"/><rect x="125" y="487" width="1" height="1" fill="#000"/><rect x="75" y="488" width="1" height="1" fill="#ff8728"/><rect x="125" y="488" width="1" height="1" fill="#ff8728"/><rect x="75" y="489" width="1" height="1" fill="#000"/><rect x="125" y="489" width="1" height="1" fill="#000"/><rect x="75" y="490" width="1" height="1" fill="#ff8728"/><rect x="125" y="490" width="1" height="1" fill="#ff8728"/><rect x="75" y="491" width="1" height="1" fill="#000"/><rect x="125" y="491" width="1" height="1" fill="#000"/></svg>
<div style="left:130px;top:448px;width:143px;height:44px;background:#d0fca8;"></div>
<div style="left:278px;top:448px;width:49px;height:44px;background:#d0fca8;"></div>
<div style="left:332px;top:448px;width:143px;height:44px;background:#d0fca8;"></div>
<div style="left:480px;top:448px;width:66px;height:44px;background:#d0fca8;"></div>
<div style="left:551px;top:448px;width:255px;height:44px;background:#d0fca8;"></div>
<div style="left:129px;top:462px;width:145px;height:1px;background:#696969;"></div>
<div style="left:129px;top:477px;width:145px;height:1px;background:#696969;"></div>
<div style="left:331px;top:462px;width:145px;height:1px;background:#696969;"></div>
<div style="left:331px;top:477px;width:145px;height:1px;background:#696969;"></div>
<div style="left:479px;top:462px;width:68px;height:1px;background:#696969;"></div>
<div style="left:550px;top:462px;width:257px;height:1px;background:#696969;"></div>
<div style="left:550px;top:477px;width:257px;height:1px;background:#696969;"></div>
<div style="left:621px;top:448px;width:1px;height:14px;background:#ffffff;"></div>
<div style="left:623px;top:448px;width:1px;height:14px;background:#ffffff;"></div>
<div style="left:622px;top:448px;width:1px;height:14px;background:#696969;"></div>
<div style="left:712px;top:448px;width:1px;height:14px;background:#ffffff;"></div>
<div style="left:714px;top:448px;width:1px;height:14px;background:#ffffff;"></div>
<div style="left:713px;top:448px;width:1px;height:14px;background:#696969;"></div>
<div style="left:753px;top:478px;width:1px;height:14px;background:#ffffff;"></div>
<div style="left:755px;top:478px;width:1px;height:14px;background:#ffffff;"></div>
<div style="left:754px;top:478px;width:1px;height:14px;background:#696969;"></div>
<div class="t" style="left:40px;top:131px;font-size:11px;line-height:15px;color:#000;font-weight:bold;">N</div>
<svg style="left:48px;top:134px" width="4" height="4" viewBox="0 0 4 4"><ellipse cx="2" cy="2" rx="1.45" ry="1.45" fill="none" stroke="#000" stroke-width="1.3"/></svg>
<div style="left:48px;top:139px;width:4px;height:1px;background:#000;"></div>
<div class="t" style="left:78px;top:131px;font-size:11px;line-height:15px;color:#000;font-weight:bold;">Дт</div>
<div class="t" style="left:132px;top:131px;font-size:11px;line-height:15px;color:#000;font-weight:bold;">Субконто Дт</div>
<div class="t" style="left:132px;top:146px;font-size:11px;line-height:15px;color:#000;font-weight:bold;">...</div>
<div class="t" style="left:132px;top:161px;font-size:11px;line-height:15px;color:#000;font-weight:bold;">...</div>
<div class="t" style="left:280px;top:131px;font-size:11px;line-height:15px;color:#000;font-weight:bold;">Кт</div>
<div class="t" style="left:334px;top:131px;font-size:11px;line-height:15px;color:#000;font-weight:bold;">Субконто Кт</div>
<div class="t" style="left:334px;top:146px;font-size:11px;line-height:15px;color:#000;font-weight:bold;">...</div>
<div class="t" style="left:334px;top:161px;font-size:11px;line-height:15px;color:#000;font-weight:bold;">...</div>
<div class="t" style="left:482px;top:131px;font-size:11px;line-height:15px;color:#000;font-weight:bold;">Валюта</div>
<div class="t" style="left:482px;top:146px;font-size:11px;line-height:15px;color:#000;font-weight:bold;">Курс</div>
<div class="t" style="left:553px;top:131px;font-size:11px;line-height:15px;color:#000;font-weight:bold;">Кіль-ть</div>
<div class="t" style="left:626px;top:131px;font-size:11px;line-height:15px;color:#000;font-weight:bold;">Вал.сум.</div>
<div class="t" style="left:717px;top:131px;font-size:11px;line-height:15px;color:#000;font-weight:bold;">Сума</div>
<div class="t" style="left:553px;top:146px;font-size:11px;line-height:15px;color:#000;font-weight:bold;">Коментар</div>
<div class="t" style="left:553px;top:161px;font-size:11px;line-height:15px;color:#000;font-weight:bold;">Фірма</div>
<div class="t" style="left:758px;top:161px;font-size:11px;line-height:15px;color:#000;font-weight:bold;">N</div>
<svg style="left:765px;top:164px" width="4" height="4" viewBox="0 0 4 4"><ellipse cx="2" cy="2" rx="1.45" ry="1.45" fill="none" stroke="#000" stroke-width="1.3"/></svg>
<div style="left:765px;top:169px;width:4px;height:1px;background:#000;"></div>
<div class="t" style="left:769.6px;top:161px;font-size:11px;line-height:15px;color:#000;font-weight:bold;">Ж</div>
<div class="t" style="left:40px;top:177px;width:30px;text-align:right;font-size:11px;line-height:15px;color:#000;">1</div>
<div class="t" style="left:77px;top:177px;font-size:11px;line-height:15px;color:#000;">661</div>
<div class="t" style="left:132px;top:177px;font-size:11px;line-height:15px;color:#000;">Коваленко О. О.</div>
<div class="t" style="left:132px;top:192px;font-size:11px;line-height:15px;color:#000;">01.03.25</div>
<div class="t" style="left:280px;top:177px;font-size:11px;line-height:15px;color:#000;">661</div>
<div class="t" style="left:334px;top:177px;font-size:11px;line-height:15px;color:#000;">Коваленко О. О.</div>
<div class="t" style="left:334px;top:192px;font-size:11px;line-height:15px;color:#000;">01.05.25</div>
<div class="t" style="left:744px;top:177px;width:60px;text-align:right;font-size:11px;line-height:15px;color:#000;">-9.10</div>
<div class="t" style="left:553px;top:192px;font-size:11px;line-height:15px;color:#000;">Пересортица периодов ЗП</div>
<div class="t" style="left:553px;top:207px;font-size:11px;line-height:15px;color:#000;">ФОП Адмінов В.С.</div>
<div class="t" style="left:40px;top:222px;width:30px;text-align:right;font-size:11px;line-height:15px;color:#000;">2</div>
<div class="t" style="left:77px;top:222px;font-size:11px;line-height:15px;color:#000;">661</div>
<div class="t" style="left:132px;top:222px;font-size:11px;line-height:15px;color:#000;">Коваленко О. О.</div>
<div class="t" style="left:132px;top:237px;font-size:11px;line-height:15px;color:#000;">01.04.25</div>
<div class="t" style="left:280px;top:222px;font-size:11px;line-height:15px;color:#000;">661</div>
<div class="t" style="left:334px;top:222px;font-size:11px;line-height:15px;color:#000;">Коваленко О. О.</div>
<div class="t" style="left:334px;top:237px;font-size:11px;line-height:15px;color:#000;">01.05.25</div>
<div class="t" style="left:744px;top:222px;width:60px;text-align:right;font-size:11px;line-height:15px;color:#000;">-1.15</div>
<div class="t" style="left:553px;top:237px;font-size:11px;line-height:15px;color:#000;">Пересортица периодов ЗП</div>
<div class="t" style="left:553px;top:252px;font-size:11px;line-height:15px;color:#000;">ФОП Адмінов В.С.</div>
<div class="t" style="left:40px;top:267px;width:30px;text-align:right;font-size:11px;line-height:15px;color:#000;">3</div>
<div class="t" style="left:77px;top:267px;font-size:11px;line-height:15px;color:#000;">661</div>
<div class="t" style="left:132px;top:267px;font-size:11px;line-height:15px;color:#000;">Мельнік І. М.</div>
<div class="t" style="left:132px;top:282px;font-size:11px;line-height:15px;color:#000;">01.02.25</div>
<div class="t" style="left:280px;top:267px;font-size:11px;line-height:15px;color:#000;">661</div>
<div class="t" style="left:334px;top:267px;font-size:11px;line-height:15px;color:#000;">Мельнік І. М.</div>
<div class="t" style="left:334px;top:282px;font-size:11px;line-height:15px;color:#000;">01.05.25</div>
<div class="t" style="left:744px;top:267px;width:60px;text-align:right;font-size:11px;line-height:15px;color:#000;">-2.00</div>
<div class="t" style="left:553px;top:282px;font-size:11px;line-height:15px;color:#000;">Пересортица периодов ЗП</div>
<div class="t" style="left:553px;top:297px;font-size:11px;line-height:15px;color:#000;">ФОП Адмінов В.С.</div>
<div class="t" style="left:40px;top:312px;width:30px;text-align:right;font-size:11px;line-height:15px;color:#000;">4</div>
<div class="t" style="left:77px;top:312px;font-size:11px;line-height:15px;color:#000;">661</div>
<div class="t" style="left:132px;top:312px;font-size:11px;line-height:15px;color:#000;">Мельнік І. М.</div>
<div class="t" style="left:132px;top:327px;font-size:11px;line-height:15px;color:#000;">01.03.25</div>
<div class="t" style="left:280px;top:312px;font-size:11px;line-height:15px;color:#000;">661</div>
<div class="t" style="left:334px;top:312px;font-size:11px;line-height:15px;color:#000;">Мельнік І. М.</div>
<div class="t" style="left:334px;top:327px;font-size:11px;line-height:15px;color:#000;">01.05.25</div>
<div class="t" style="left:744px;top:312px;width:60px;text-align:right;font-size:11px;line-height:15px;color:#000;">-3.60</div>
<div class="t" style="left:553px;top:327px;font-size:11px;line-height:15px;color:#000;">Пересортица периодов ЗП</div>
<div class="t" style="left:553px;top:342px;font-size:11px;line-height:15px;color:#000;">ФОП Адмінов В.С.</div>
<div class="t" style="left:40px;top:357px;width:30px;text-align:right;font-size:11px;line-height:15px;color:#000;">5</div>
<div class="t" style="left:77px;top:357px;font-size:11px;line-height:15px;color:#000;">661</div>
<div class="t" style="left:132px;top:357px;font-size:11px;line-height:15px;color:#000;">Мельнік І. М.</div>
<div class="t" style="left:132px;top:372px;font-size:11px;line-height:15px;color:#000;">01.04.25</div>
<div class="t" style="left:280px;top:357px;font-size:11px;line-height:15px;color:#000;">661</div>
<div class="t" style="left:334px;top:357px;font-size:11px;line-height:15px;color:#000;">Мельнік І. М.</div>
<div class="t" style="left:334px;top:372px;font-size:11px;line-height:15px;color:#000;">01.05.25</div>
<div class="t" style="left:744px;top:357px;width:60px;text-align:right;font-size:11px;line-height:15px;color:#000;">-2.65</div>
<div class="t" style="left:553px;top:372px;font-size:11px;line-height:15px;color:#000;">Пересортица периодов ЗП</div>
<div class="t" style="left:553px;top:387px;font-size:11px;line-height:15px;color:#000;">ФОП Адмінов В.С.</div>
<div class="t" style="left:40px;top:402px;width:30px;text-align:right;font-size:11px;line-height:15px;color:#000;">6</div>
<div class="t" style="left:77px;top:402px;font-size:11px;line-height:15px;color:#000;">661</div>
<div class="t" style="left:132px;top:402px;font-size:11px;line-height:15px;color:#000;">Шевченко В. О.</div>
<div class="t" style="left:132px;top:417px;font-size:11px;line-height:15px;color:#000;">01.03.25</div>
<div class="t" style="left:280px;top:402px;font-size:11px;line-height:15px;color:#000;">661</div>
<div class="t" style="left:334px;top:402px;font-size:11px;line-height:15px;color:#000;">Шевченко В. О.</div>
<div class="t" style="left:334px;top:417px;font-size:11px;line-height:15px;color:#000;">01.05.25</div>
<div class="t" style="left:744px;top:402px;width:60px;text-align:right;font-size:11px;line-height:15px;color:#000;">-9.10</div>
<div class="t" style="left:553px;top:417px;font-size:11px;line-height:15px;color:#000;">Пересортица периодов ЗП</div>
<div class="t" style="left:553px;top:432px;font-size:11px;line-height:15px;color:#000;">ФОП Адмінов В.С.</div>
<div class="t" style="left:40px;top:447px;width:30px;text-align:right;font-size:11px;line-height:15px;color:#000;">7</div>
<div class="t" style="left:77px;top:447px;font-size:11px;line-height:15px;color:#fff;">661</div>
<div class="t" style="left:132px;top:447px;font-size:11px;line-height:15px;color:#000;">Шевченко В. О.</div>
<div class="t" style="left:132px;top:462px;font-size:11px;line-height:15px;color:#000;">01.04.25</div>
<div class="t" style="left:280px;top:447px;font-size:11px;line-height:15px;color:#000;">661</div>
<div class="t" style="left:334px;top:447px;font-size:11px;line-height:15px;color:#000;">Шевченко В. О.</div>
<div class="t" style="left:334px;top:462px;font-size:11px;line-height:15px;color:#000;">01.05.25</div>
<div class="t" style="left:744px;top:447px;width:60px;text-align:right;font-size:11px;line-height:15px;color:#000;">-1.15</div>
<div class="t" style="left:553px;top:462px;font-size:11px;line-height:15px;color:#000;">Пересортица периодов ЗП</div>
<div class="t" style="left:553px;top:477px;font-size:11px;line-height:15px;color:#000;">ФОП Адмінов В.С.</div>
<svg style="left:0;top:0" width="843" height="579" viewBox="0 0 843 579"><g transform="translate(0,0)"><path d="M23 181.5 L26.8 185.5 L24.5 188.8 L20.7 184.8 Z" fill="#00ffff" stroke="#000" stroke-width="1"/><path d="M26 185.5 L28 184 L29 186 L27 188 Z" fill="#000"/><path d="M29.5 183.5 L33.3 187.5 L31 190.8 L27.2 186.8 Z" fill="#ff0000" stroke="#000" stroke-width="1"/></g><g transform="translate(0,45)"><path d="M23 181.5 L26.8 185.5 L24.5 188.8 L20.7 184.8 Z" fill="#00ffff" stroke="#000" stroke-width="1"/><path d="M26 185.5 L28 184 L29 186 L27 188 Z" fill="#000"/><path d="M29.5 183.5 L33.3 187.5 L31 190.8 L27.2 186.8 Z" fill="#ff0000" stroke="#000" stroke-width="1"/></g><g transform="translate(0,90)"><path d="M23 181.5 L26.8 185.5 L24.5 188.8 L20.7 184.8 Z" fill="#00ffff" stroke="#000" stroke-width="1"/><path d="M26 185.5 L28 184 L29 186 L27 188 Z" fill="#000"/><path d="M29.5 183.5 L33.3 187.5 L31 190.8 L27.2 186.8 Z" fill="#ff0000" stroke="#000" stroke-width="1"/></g><g transform="translate(0,135)"><path d="M23 181.5 L26.8 185.5 L24.5 188.8 L20.7 184.8 Z" fill="#00ffff" stroke="#000" stroke-width="1"/><path d="M26 185.5 L28 184 L29 186 L27 188 Z" fill="#000"/><path d="M29.5 183.5 L33.3 187.5 L31 190.8 L27.2 186.8 Z" fill="#ff0000" stroke="#000" stroke-width="1"/></g><g transform="translate(0,180)"><path d="M23 181.5 L26.8 185.5 L24.5 188.8 L20.7 184.8 Z" fill="#00ffff" stroke="#000" stroke-width="1"/><path d="M26 185.5 L28 184 L29 186 L27 188 Z" fill="#000"/><path d="M29.5 183.5 L33.3 187.5 L31 190.8 L27.2 186.8 Z" fill="#ff0000" stroke="#000" stroke-width="1"/></g><g transform="translate(0,225)"><path d="M23 181.5 L26.8 185.5 L24.5 188.8 L20.7 184.8 Z" fill="#00ffff" stroke="#000" stroke-width="1"/><path d="M26 185.5 L28 184 L29 186 L27 188 Z" fill="#000"/><path d="M29.5 183.5 L33.3 187.5 L31 190.8 L27.2 186.8 Z" fill="#ff0000" stroke="#000" stroke-width="1"/></g><g transform="translate(0,270)"><path d="M23 181.5 L26.8 185.5 L24.5 188.8 L20.7 184.8 Z" fill="#00ffff" stroke="#000" stroke-width="1"/><path d="M26 185.5 L28 184 L29 186 L27 188 Z" fill="#000"/><path d="M29.5 183.5 L33.3 187.5 L31 190.8 L27.2 186.8 Z" fill="#ff0000" stroke="#000" stroke-width="1"/></g></svg>
<div style="left:815px;top:502px;width:2px;height:17px;background:#808080;"></div>
</body></html>
